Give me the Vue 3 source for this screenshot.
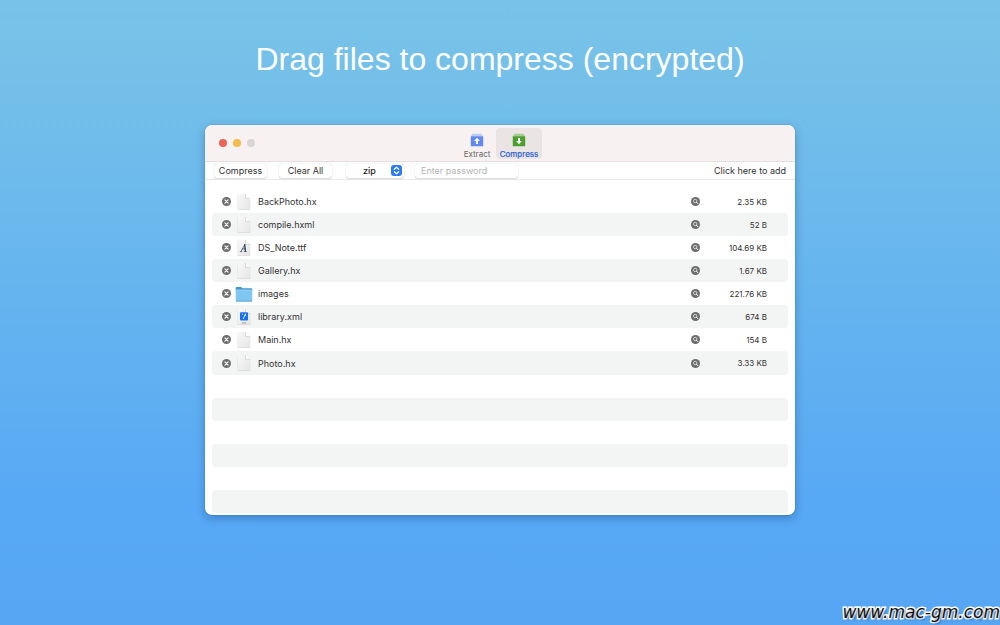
<script setup>
import { ref } from 'vue'

const format = ref('zip')
const password = ref('')

const files = [
  { name: 'BackPhoto.hx', size: '2.35 KB', kind: 'plain' },
  { name: 'compile.hxml', size: '52 B', kind: 'plain' },
  { name: 'DS_Note.ttf', size: '104.69 KB', kind: 'font' },
  { name: 'Gallery.hx', size: '1.67 KB', kind: 'plain' },
  { name: 'images', size: '221.76 KB', kind: 'folder' },
  { name: 'library.xml', size: '674 B', kind: 'xml' },
  { name: 'Main.hx', size: '154 B', kind: 'plain' },
  { name: 'Photo.hx', size: '3.33 KB', kind: 'plain' },
]
const emptyRows = 6
</script>

<template>
  <main class="stage">
    <svg class="defs" width="0" height="0" aria-hidden="true">
      <linearGradient id="paper" x1="0" y1="0" x2="1" y2="1">
        <stop offset="0" stop-color="#f8f8f8" />
        <stop offset="1" stop-color="#e6e6e6" />
      </linearGradient>
    </svg>

    <h1>Drag files to compress (encrypted)</h1>

    <section class="window">
      <header class="titlebar">
        <div class="lights">
          <button class="light red" aria-label="Close"></button>
          <button class="light yellow" aria-label="Minimize"></button>
          <button class="light grey" aria-label="Zoom"></button>
        </div>
        <nav class="tabs">
          <button class="tab">
            <svg width="14" height="14" viewBox="0 0 14 14" aria-hidden="true">
              <path d="M2.5 .8h9L13 3.3H1z" fill="#bccbf3" />
              <path d="M.8 3.300h12.400V13.200H.8z" fill="#6389ee" />
              <path d="M7 4.800 9.900 8H8v3H6V8H4.100z" fill="#fff" />
            </svg>
            <span>Extract</span>
          </button>
          <button class="tab active">
            <svg width="14" height="14" viewBox="0 0 14 14" aria-hidden="true">
              <path d="M2.500 .8h9L13 3.300H1z" fill="#a5cb91" />
              <path d="M.8 3.300h12.400V13.200H.8z" fill="#4b9f2c" />
              <path d="M7 11.200 9.900 8H8V5H6v3H4.100z" fill="#fff" />
            </svg>
            <span>Compress</span>
          </button>
        </nav>
      </header>

      <div class="toolbar">
        <button class="push">Compress</button>
        <button class="push">Clear All</button>
        <label class="picker">
          <select v-model="format" aria-label="Archive format">
            <option>zip</option>
            <option>7z</option>
            <option>tar</option>
          </select>
          <svg width="11" height="11" viewBox="0 0 11 11" aria-hidden="true">
            <rect width="11" height="11" rx="3" fill="#2a7bf6" />
            <path d="M3.300 4.300 5.500 2.200l2.200 2.100M3.300 6.700l2.200 2.100 2.200-2.100" fill="none" stroke="#fff" stroke-width="1.200" stroke-linecap="round" stroke-linejoin="round" />
          </svg>
        </label>
        <input v-model="password" class="password" type="password" placeholder="Enter password" aria-label="Password" />
        <button class="add">Click here to add</button>
      </div>

      <ul class="list">
        <li v-for="file in files" :key="file.name" class="row">
          <button class="round" :aria-label="'Remove ' + file.name">
            <svg width="9" height="9" viewBox="0 0 9 9">
              <circle cx="4.500" cy="4.500" r="4.500" fill="#6d6d6d" />
              <path d="M2.900 2.900l3.200 3.200M6.100 2.900 2.900 6.100" stroke="#fff" stroke-width="1.100" stroke-linecap="round" />
            </svg>
          </button>
          <svg v-if="file.kind === 'folder'" class="icon" width="18" height="18" viewBox="0 0 18 18" aria-hidden="true">
            <path d="M.7 3.200q0-1.200 1.200-1.200h4.200l1.500 1.300h8.600q1.100 0 1.100 1.200V6H.7z" fill="#4698cb" />
            <rect x=".7" y="4.800" width="16.600" height="11.700" rx="1" fill="#7fc6f1" />
            <path d="M1 5.200h16" stroke="#a3dafa" stroke-width=".7" />
            <path d="M1 16.200h16" stroke="#4c9fd2" stroke-width=".7" />
          </svg>
          <svg v-else class="icon" width="18" height="18" viewBox="0 0 18 18" aria-hidden="true">
            <path d="M2.700 1.400h8l4.500 4.300v11H2.700z" fill="#d2d2d2" />
            <path d="M2.900 .8h7.800l4.200 4.400v11H2.900z" fill="url(#paper)" />
            <path d="M10.500 1v4.400h4.300z" fill="#fff" />
            <path d="M10.500 1v4.400h4.300" fill="none" stroke="#cdcdcd" stroke-width=".7" />
            <g v-if="file.kind === 'font'" fill="none" stroke="#30435f" stroke-linecap="round">
              <path d="M6 12.400 9.700 5.800M7.300 9.900h3" stroke-width=".7" />
              <path d="m9.700 5.800.7 6.500" stroke-width="1.400" />
              <path d="M5.200 12.600h1.800M9.300 12.600h2.200" stroke-width=".6" />
            </g>
            <g v-if="file.kind === 'xml'">
              <rect x="5" y="4.200" width="8" height="8.300" rx="1" fill="#1671f5" />
              <path d="m7 6.500 1-.7M10.500 5.800 8.200 11M10.500 5.800l.2 2" stroke="#d9ebff" stroke-width="1" fill="none" />
              <path d="M6.800 15h4.400" stroke="#888" stroke-width=".8" />
            </g>
          </svg>
          <span class="name">{{ file.name }}</span>
          <button class="round" :aria-label="'Preview ' + file.name">
            <svg width="9" height="9" viewBox="0 0 9 9">
              <circle cx="4.500" cy="4.500" r="4.500" fill="#6d6d6d" />
              <circle cx="4.200" cy="4" r="1.700" fill="none" stroke="#e8e8e8" stroke-width=".8" />
              <path d="m5.500 5.300 1.400 1.400" stroke="#fff" stroke-width="1" stroke-linecap="round" />
            </svg>
          </button>
          <span class="size">{{ file.size }}</span>
        </li>
        <li v-for="n in emptyRows" :key="n" class="row" aria-hidden="true"></li>
      </ul>
    </section>

    <a class="site" href="#">www.mac-gm.com</a>
  </main>
</template>

<style>
body {
  margin: 0;
}
</style>

<style scoped>
.stage {
  position: relative;
  box-sizing: border-box;
  min-height: 100vh;
  padding-bottom: 110px;
  display: flex;
  flex-direction: column;
  align-items: center;
  overflow: hidden;
  background: linear-gradient(#77c3e7 0%, #74c0e9 12%, #57a8f5 82%, #56a6f4 100%);
  font-family: Inter, "Liberation Sans", sans-serif;
  font-size: 9px;
  color: #333;
}

.defs {
  position: absolute;
}

h1 {
  margin: 0;
  padding: 39px 0 46px;
  font: 400 32px/40px "Liberation Sans", Arial, sans-serif;
  color: #fff;
}

button {
  border: 0;
  padding: 0;
  background: none;
  font: inherit;
  color: inherit;
}

.window {
  flex: 1;
  width: 59%;
  display: flex;
  flex-direction: column;
  border-radius: 7px;
  overflow: hidden;
  background: #fff;
  box-shadow: 0 0 1px rgba(0, 40, 80, 0.5), 0 3px 10px rgba(0, 40, 90, 0.3);
}

.titlebar {
  display: grid;
  grid-template-columns: 1fr auto 1fr;
  height: 36px;
  background: #f7f1f1;
  border-bottom: 1px solid #e5e0e0;
}

.lights {
  display: flex;
  align-items: center;
  gap: 6px;
  padding-left: 14px;
}

.light {
  width: 8px;
  height: 8px;
  border-radius: 50%;
}

.red {
  background: #ec6459;
}

.yellow {
  background: #f2bd4a;
}

.grey {
  background: #dbd5d5;
}

.tabs {
  display: flex;
  padding-top: 3px;
}

.tab {
  display: flex;
  flex-direction: column;
  align-items: center;
  justify-content: space-between;
  width: 38px;
  height: 31px;
  padding-top: 5px;
  border-radius: 4px;
  font-size: 8px;
  line-height: 9px;
  color: #6b6767;
}

.tab.active {
  width: 46px;
  background: #eae4e4;
  color: #2861dc;
  -webkit-text-stroke: 0.2px #2861dc;
}

.toolbar {
  display: flex;
  align-items: center;
  height: 17px;
  padding: 0 9px;
  border-bottom: 1px solid #e9e9e9;
}

.push,
.picker,
.password {
  box-sizing: border-box;
  height: 14px;
  border-radius: 3px;
  background: #fff;
  box-shadow: 0 0 1px rgba(0, 0, 0, 0.25), 0 1px 1px rgba(0, 0, 0, 0.12);
}

.push {
  width: 53px;
  margin-right: 12px;
}

.picker {
  display: flex;
  align-items: center;
  width: 58px;
  padding-right: 2px;
  margin: 0 11px 0 2px;
}

.picker select {
  appearance: none;
  flex: 1;
  min-width: 0;
  border: 0;
  padding: 0 0 0 17px;
  background: none;
  font: inherit;
  font-weight: 500;
  color: #222;
}

.password {
  width: 103px;
  border: 0;
  padding: 0 6px;
  font: inherit;
}

.password::placeholder {
  color: #b5b5b5;
}

.add {
  margin-left: auto;
}

.list {
  flex: 1;
  display: grid;
  grid-template-rows: repeat(14, minmax(23px, 1fr));
  margin: 0;
  padding: 10px 7px 2px;
  list-style: none;
}

.row {
  display: flex;
  align-items: center;
  padding: 0 21px 0 10px;
  border-radius: 4px;
}

.row:nth-child(even) {
  background: #f3f5f5;
}

.round {
  display: flex;
}

.icon {
  margin: 0 5px 0 4px;
}

.name {
  flex: 1;
}

.size {
  width: 67px;
  text-align: right;
  font-size: 8px;
}

.site {
  position: absolute;
  right: 0;
  bottom: 2px;
  font: italic 400 17px/22px "DejaVu Sans", sans-serif;
  color: #111;
  text-decoration: none;
  -webkit-text-stroke: 3px #fff;
  paint-order: stroke fill;
  text-shadow: 2px 2px 2px rgba(0, 30, 70, 0.4);
}
</style>
